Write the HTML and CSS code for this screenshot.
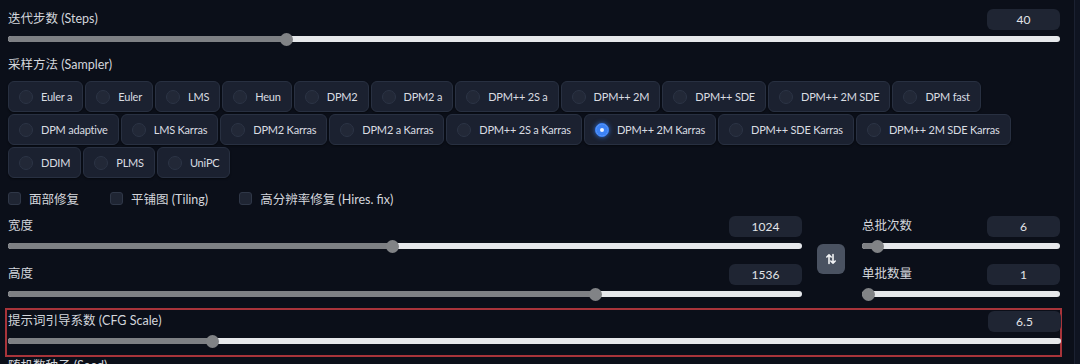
FILE: index.html
```html
<!DOCTYPE html>
<html>
<head>
    <title>txt2img settings</title>
    <link rel="stylesheet" href="styles.css">
</head>
<body>
<div class="page">
    <div class="main">
        <div class="field">
            <div class="field-head">
                <span class="label">迭代步数 (Steps)</span>
                <span class="num">40</span>
            </div>
            <div class="slider"><div class="track"><div class="fill" style="width:26.5%"></div><span class="thumb" style="left:26.5%"></span></div></div>
        </div>

        <div class="label sampler-label">采样方法 (Sampler)</div>
        <div class="radios">
            <label class="radio"><span class="dot"></span>Euler a</label>
            <label class="radio"><span class="dot"></span>Euler</label>
            <label class="radio"><span class="dot"></span>LMS</label>
            <label class="radio"><span class="dot"></span>Heun</label>
            <label class="radio"><span class="dot"></span>DPM2</label>
            <label class="radio"><span class="dot"></span>DPM2 a</label>
            <label class="radio"><span class="dot"></span>DPM++ 2S a</label>
            <label class="radio"><span class="dot"></span>DPM++ 2M</label>
            <label class="radio"><span class="dot"></span>DPM++ SDE</label>
            <label class="radio"><span class="dot"></span>DPM++ 2M SDE</label>
            <label class="radio"><span class="dot"></span>DPM fast</label>
            <label class="radio"><span class="dot"></span>DPM adaptive</label>
            <label class="radio"><span class="dot"></span>LMS Karras</label>
            <label class="radio"><span class="dot"></span>DPM2 Karras</label>
            <label class="radio"><span class="dot"></span>DPM2 a Karras</label>
            <label class="radio"><span class="dot"></span>DPM++ 2S a Karras</label>
            <label class="radio selected"><span class="dot"></span>DPM++ 2M Karras</label>
            <label class="radio"><span class="dot"></span>DPM++ SDE Karras</label>
            <label class="radio"><span class="dot"></span>DPM++ 2M SDE Karras</label>
            <label class="radio"><span class="dot"></span>DDIM</label>
            <label class="radio"><span class="dot"></span>PLMS</label>
            <label class="radio"><span class="dot"></span>UniPC</label>
        </div>

        <div class="checks">
            <label class="check"><span class="box"></span>面部修复</label>
            <label class="check"><span class="box"></span>平铺图 (Tiling)</label>
            <label class="check"><span class="box"></span>高分辨率修复 (Hires. fix)</label>
        </div>

        <div class="dims">
            <div class="col-left">
                <div class="field">
                    <div class="field-head">
                        <span class="label">宽度</span>
                        <span class="num">1024</span>
                    </div>
                    <div class="slider"><div class="track"><div class="fill" style="width:48.4%"></div><span class="thumb" style="left:48.4%"></span></div></div>
                </div>
                <div class="field gap-top">
                    <div class="field-head">
                        <span class="label">高度</span>
                        <span class="num">1536</span>
                    </div>
                    <div class="slider"><div class="track"><div class="fill" style="width:74%"></div><span class="thumb" style="left:74%"></span></div></div>
                </div>
            </div>
            <button class="swap" type="button" title="Swap width and height">
                <svg width="12" height="12" viewBox="0 0 12 12" fill="none" stroke="#f3f4f6" stroke-width="1.6" stroke-linecap="round" stroke-linejoin="round">
                    <path d="M4 10.5V1.8M1.8 4 4 1.8 6.2 4"/>
                    <path d="M8 1.5v8.7M5.8 8 8 10.2 10.2 8"/>
                </svg>
            </button>
            <div class="col-right">
                <div class="field">
                    <div class="field-head">
                        <span class="label">总批次数</span>
                        <span class="num">6</span>
                    </div>
                    <div class="slider"><div class="track"><div class="fill" style="width:7.6%"></div><span class="thumb" style="left:7.6%"></span></div></div>
                </div>
                <div class="field gap-top">
                    <div class="field-head">
                        <span class="label">单批数量</span>
                        <span class="num">1</span>
                    </div>
                    <div class="slider"><div class="track"><div class="fill" style="width:3.5%"></div><span class="thumb" style="left:3.5%"></span></div></div>
                </div>
            </div>
        </div>

        <div class="field highlight">
            <div class="field-head">
                <span class="label">提示词引导系数 (CFG Scale)</span>
                <span class="num">6.5</span>
            </div>
            <div class="slider"><div class="track"><div class="fill" style="width:19.4%"></div><span class="thumb" style="left:19.4%"></span></div></div>
        </div>

        <div class="label seed-label">随机数种子 (Seed)</div>
    </div>
    <div class="side"></div>
</div>
</body>
</html>
```

FILE: styles.css
```css
body {
  margin: 0;
  background-color: #0b0f19;
  font-family: Lato, "Noto Sans CJK SC", sans-serif;
  font-size: 12px;
  color: #d6d9de;
}
.page {
  display: flex;
  height: 364px;
  overflow: hidden;
}
.main {
  width: 1052px;
  padding: 8px 14px 0 8px;
}
.side {
  flex: 1;
  background-color: #0f1421;
  border-left: 1px solid #1b2131;
}
.label {
  font-size: 12.5px;
  color: #d3d6dc;
  line-height: 16px;
}
.field-head {
  display: flex;
  justify-content: space-between;
  align-items: center;
  height: 22px;
}
.num {
  width: 73px;
  height: 21px;
  display: flex;
  align-items: center;
  justify-content: center;
  background-color: #1f2533;
  border-radius: 6px;
  font-size: 12px;
  color: #e2e4e8;
}
.slider {
  height: 18px;
  display: flex;
  align-items: center;
}
.track {
  position: relative;
  flex: 1;
  height: 6px;
  border-radius: 3px;
  background-color: #e6e8eb;
}
.fill {
  height: 100%;
  border-radius: 3px 0 0 3px;
  background-color: #7e8084;
}
.thumb {
  position: absolute;
  top: 50%;
  width: 13px;
  height: 13px;
  margin: -6.5px 0 0 -6.5px;
  border-radius: 50%;
  background-color: #818386;
}
.sampler-label {
  margin-top: 9px;
}
.radios {
  display: flex;
  flex-wrap: wrap;
  gap: 2px 2px;
  margin-top: 8px;
}
.radio {
  display: flex;
  align-items: center;
  height: 31px;
  box-sizing: border-box;
  padding: 0 10px 0 10px;
  background-color: #1b2130;
  border: 1px solid #283041;
  border-radius: 6px;
  box-shadow: 0 1px 2px rgba(0, 0, 0, 0.4);
  font-size: 11px;
  letter-spacing: -0.2px;
  color: #d9dce1;
}
.dot {
  width: 14px;
  height: 14px;
  box-sizing: border-box;
  margin-right: 8px;
  border-radius: 50%;
  background-color: #222837;
  border: 1px solid #2c3445;
}
.radio.selected .dot {
  background-color: #3b82f6;
  border-color: #3b82f6;
  box-shadow: 0 0 5px rgba(59, 130, 246, 0.8), inset 0 0 0 4px #3b82f6, inset 0 0 0 7px #eef4ff;
}
.checks {
  display: flex;
  gap: 31px;
  margin-top: 12px;
  height: 16px;
  align-items: center;
}
.check {
  display: flex;
  align-items: center;
  font-size: 12.5px;
  color: #d3d6dc;
}
.box {
  width: 13px;
  height: 13px;
  box-sizing: border-box;
  margin-right: 8px;
  background-color: #1f2533;
  border: 1px solid #2f3747;
  border-radius: 3px;
}
.dims {
  display: flex;
  align-items: center;
  margin-top: 9px;
}
.col-left {
  width: 794px;
}
.col-right {
  width: 198px;
}
.gap-top {
  margin-top: 8px;
}
.swap {
  width: 28px;
  height: 30px;
  margin: 0 17px 0 15px;
  padding: 0;
  display: flex;
  align-items: center;
  justify-content: center;
  background-color: #4a5261;
  border: none;
  border-radius: 6px;
}
.highlight {
  margin: 5px -2px 0 -3px;
  padding: 0 0 5px 1px;
  border: 2px solid #a8343a;
}
.highlight .field-head,
.highlight .slider {
  margin-right: -1px;
}
.seed-label {
  margin-top: 1px;
}
```
